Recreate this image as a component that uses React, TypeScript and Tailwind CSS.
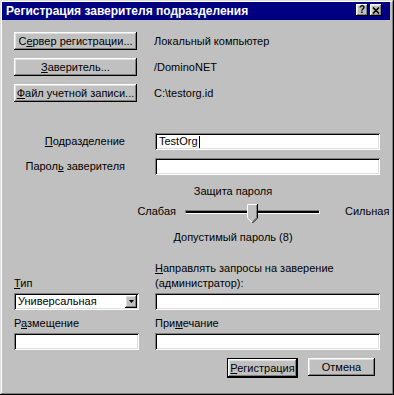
import React from "react";

const raised =
  "shadow-[inset_-1px_-1px_#000000,inset_1px_1px_#ffffff,inset_-2px_-2px_#808080,inset_2px_2px_#dfdfdf]";
const sunken =
  "shadow-[inset_1px_1px_#808080,inset_-1px_-1px_#ffffff,inset_2px_2px_#000000,inset_-2px_-2px_#dfdfdf]";

function Btn({ children, w }: { children: React.ReactNode; w: string }) {
  return (
    <div className={`${w} h-[18px] bg-[#c0c0c0] ${raised} flex items-center justify-center leading-none shrink-0`}>
      {children}
    </div>
  );
}

function Field({ w, children }: { w: string; children?: React.ReactNode }) {
  return (
    <div className={`${w} h-[17px] bg-white ${sunken} flex items-center pl-[4px] leading-none shrink-0`}>
      {children}
    </div>
  );
}

function Thumb() {
  return (
    <svg width="11" height="19" viewBox="0 0 11 19" className="block">
      <polygon points="0.5,0.5 10.5,0.5 10.5,14 5.5,18.5 0.5,14" fill="#c0c0c0" />
      <polyline points="0.5,14 0.5,0.5 10,0.5" fill="none" stroke="#ffffff" strokeWidth="1" />
      <polyline points="10.5,0 10.5,14 5.5,19" fill="none" stroke="#000000" strokeWidth="1" />
      <polyline points="9.5,1 9.5,13.6 5.5,17.6" fill="none" stroke="#808080" strokeWidth="1" />
      <line x1="0.5" y1="14" x2="5" y2="18.3" stroke="#ffffff" strokeWidth="1" />
    </svg>
  );
}

export default function App() {
  return (
    <div
      className="w-[394px] h-[395px] bg-[#c0c0c0] pt-[2px] pl-[2px] pr-[4px] pb-[2px] flex flex-col text-[11px] text-black shadow-[inset_-1px_-1px_#000000,inset_1px_1px_#dfdfdf,inset_-2px_-2px_#808080,inset_2px_2px_#ffffff] overflow-hidden"
      style={{ fontFamily: "'Liberation Sans', Arial, sans-serif" }}
    >
      {/* Title bar */}
      <div className="h-[18px] bg-[#000080] flex items-start pt-[2px] pl-[4px] pr-[8px] shrink-0">
        <div className="flex-1 text-white font-bold text-[12px] leading-[14px]">
          Регистрация заверителя подразделения
        </div>
        <div className="flex gap-[2px]">
          <div className={`w-[12px] h-[12px] bg-[#c0c0c0] ${raised} flex items-center justify-center text-[10px] font-bold leading-none`}>
            ?
          </div>
          <div className={`w-[12px] h-[12px] bg-[#c0c0c0] ${raised} flex items-center justify-center`}>
            <svg width="8" height="7" viewBox="0 0 8 7">
              <path d="M1 0.5 L7 6.5 M7 0.5 L1 6.5" stroke="#000" strokeWidth="1.6" />
            </svg>
          </div>
        </div>
      </div>

      {/* Body */}
      <div className="flex flex-col pl-[12px] pt-[12px]">
        {/* top buttons */}
        <div className="flex flex-col gap-[8px]">
          <div className="flex items-center">
            <Btn w="w-[123px]">
              <span>С<u>е</u>рвер регистрации...</span>
            </Btn>
            <span className="ml-[17px]">Локальный компьютер</span>
          </div>
          <div className="flex items-center">
            <Btn w="w-[123px]">
              <span><u>З</u>аверитель...</span>
            </Btn>
            <span className="ml-[17px]">/DominoNET</span>
          </div>
          <div className="flex items-center">
            <Btn w="w-[123px]">
              <span><u>Ф</u>айл учетной записи...</span>
            </Btn>
            <span className="ml-[17px]">C:\testorg.id</span>
          </div>
        </div>

        {/* org + password */}
        <div className="flex flex-col gap-[8px] mt-[31px]">
          <div className="flex items-center">
            <span className="w-[111px] text-right"><u>П</u>одразделение</span>
            <div className="ml-[30px]">
              <Field w="w-[225px]">
                <span>TestOrg</span>
                <span className="inline-block w-[1px] h-[12px] bg-black ml-[1px]" />
              </Field>
            </div>
          </div>
          <div className="flex items-center">
            <span className="w-[111px] text-right">Парол<u>ь</u> заверителя</span>
            <div className="ml-[30px]">
              <Field w="w-[225px]" />
            </div>
          </div>
        </div>

        {/* slider */}
        <div className="w-[200px] ml-[119px] text-center leading-[13px] mt-[10px]">Защита пароля</div>
        <div className="flex items-center h-[20px] mt-[3px]">
          <span className="w-[162px] text-right">Слабая</span>
          <div className="relative ml-[9px] w-[135px] h-[20px]">
            <div className="absolute left-0 right-0 top-[9px] h-[4px] border-t border-t-[#808080] border-b border-b-white border-l border-l-[#808080] border-r border-r-white bg-black" />
            <div className="absolute left-[62px] top-[3px]">
              <Thumb />
            </div>
          </div>
          <span className="ml-[25px]">Сильная</span>
        </div>
        <div className="w-[200px] ml-[119px] text-center leading-[13px] mt-[10px]">Допустимый пароль (8)</div>

        {/* bottom section */}
        <div className="flex items-end leading-[15px] mt-[17px]">
          <div className="w-[125px]"><u>Т</u>ип</div>
          <div className="ml-[16px] w-[225px]">
            <u>Н</u>аправлять запросы на заверение
            <br />
            (администратор):
          </div>
        </div>
        <div className="flex mt-[2px]">
          <div className={`w-[125px] h-[17px] bg-white ${sunken} flex items-center pl-[4px] pr-[2px] leading-none`}>
            <span className="flex-1">Универсальная</span>
            <div className={`w-[12px] h-[13px] bg-[#c0c0c0] ${raised} flex items-center justify-center`}>
              <svg width="5" height="3" viewBox="0 0 5 3">
                <polygon points="0,0 5,0 2.5,3" fill="#000" />
              </svg>
            </div>
          </div>
          <div className="ml-[16px]">
            <Field w="w-[225px]" />
          </div>
        </div>
        <div className="flex leading-[13px] mt-[7px]">
          <div className="w-[125px]">Р<u>а</u>змещение</div>
          <div className="ml-[16px]">При<u>м</u>ечание</div>
        </div>
        <div className="flex mt-[3px]">
          <Field w="w-[125px]" />
          <div className="ml-[16px]">
            <Field w="w-[225px]" />
          </div>
        </div>

        {/* dialog buttons */}
        <div className="flex mt-[8px]">
          <div className="ml-[213px] border border-black">
            <Btn w="w-[69px]">
              <span><u>Р</u>егистрация</span>
            </Btn>
          </div>
          <div className="ml-[10px]">
            <Btn w="w-[67px]">
              <span>Отмена</span>
            </Btn>
          </div>
        </div>
      </div>
    </div>
  );
}
